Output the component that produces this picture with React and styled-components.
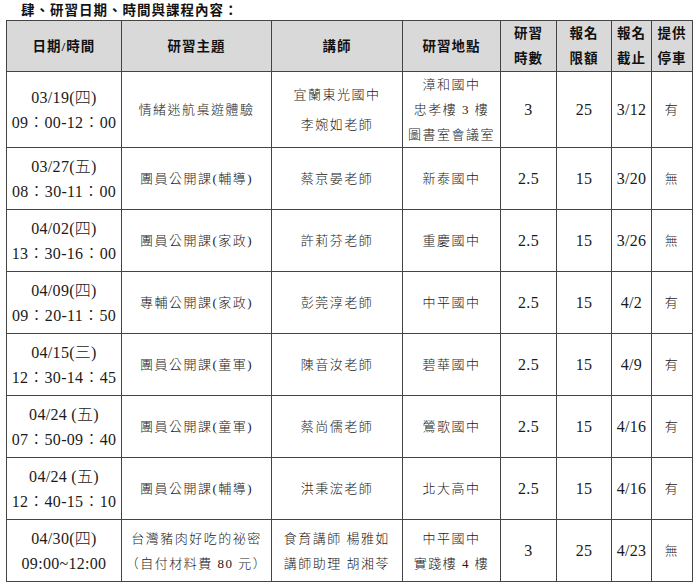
import React from 'react';
import styled, { createGlobalStyle } from 'styled-components';

const GlobalStyle = createGlobalStyle`
  body {
    margin: 0;
    background: #ffffff;
    font-family: 'Liberation Serif', 'Noto Sans CJK TC', serif;
    color: #1a1a1a;
  }
`;

const Page = styled.div`
  width: 700px;
  height: 587px;
  padding-top: 3px;
  box-sizing: border-box;
`;

const Title = styled.h2`
  margin: 0 0 0 21px;
  height: 17px;
  font-size: 13.5px;
  line-height: 16px;
  font-weight: 700;
  letter-spacing: 1px;
  color: #111;
`;

const Table = styled.table`
  margin-left: 6px;
  width: 687px;
  border-collapse: collapse;
  table-layout: fixed;
`;

const Col = styled.col`
  width: ${p => p.$w}px;
`;

const HeadCell = styled.th`
  height: 50px;
  padding: 0;
  background: #d9d9d9;
  border: 1px solid #444;
  font-size: 13.5px;
  line-height: 25px;
  font-weight: 700;
  letter-spacing: 1px;
  text-align: center;
  vertical-align: middle;
  color: #111;
`;

const Cell = styled.td`
  height: ${p => (p.$tall ? 75 : 61)}px;
  padding: 0;
  border: 1px solid #444;
  font-size: ${p => (p.$num ? 16 : 13)}px;
  font-weight: 300;
  line-height: ${p => (p.$loose ? 30 : 25)}px;
  letter-spacing: ${p => (p.$num ? 0.3 : 1.5)}px;
  text-align: center;
  vertical-align: middle;
  white-space: nowrap;
`;

const Line = styled.div``;

const cols = [115, 150, 131, 98, 56, 55, 40, 41];

const heads = [
  ['日期/時間'],
  ['研習主題'],
  ['講師'],
  ['研習地點'],
  ['研習', '時數'],
  ['報名', '限額'],
  ['報名', '截止'],
  ['提供', '停車'],
];

const rows = [
  {
    date: ['03/19(四)', '09：00-12：00'],
    topic: ['情緒迷航桌遊體驗'],
    teacher: ['宜蘭東光國中', '李婉如老師'],
    place: ['漳和國中', '忠孝樓 3 樓', '圖書室會議室'],
    hours: '3', quota: '25', deadline: '3/12', parking: '有',
    tall: true, looseTeacher: true,
  },
  {
    date: ['03/27(五)', '08：30-11：00'],
    topic: ['團員公開課(輔導)'],
    teacher: ['蔡京晏老師'],
    place: ['新泰國中'],
    hours: '2.5', quota: '15', deadline: '3/20', parking: '無',
  },
  {
    date: ['04/02(四)', '13：30-16：00'],
    topic: ['團員公開課(家政)'],
    teacher: ['許莉芬老師'],
    place: ['重慶國中'],
    hours: '2.5', quota: '15', deadline: '3/26', parking: '無',
  },
  {
    date: ['04/09(四)', '09：20-11：50'],
    topic: ['專輔公開課(家政)'],
    teacher: ['彭莞淳老師'],
    place: ['中平國中'],
    hours: '2.5', quota: '15', deadline: '4/2', parking: '有',
  },
  {
    date: ['04/15(三)', '12：30-14：45'],
    topic: ['團員公開課(童軍)'],
    teacher: ['陳音汝老師'],
    place: ['碧華國中'],
    hours: '2.5', quota: '15', deadline: '4/9', parking: '有',
  },
  {
    date: ['04/24 (五)', '07：50-09：40'],
    topic: ['團員公開課(童軍)'],
    teacher: ['蔡尚儒老師'],
    place: ['鶯歌國中'],
    hours: '2.5', quota: '15', deadline: '4/16', parking: '有',
  },
  {
    date: ['04/24 (五)', '12：40-15：10'],
    topic: ['團員公開課(輔導)'],
    teacher: ['洪秉浤老師'],
    place: ['北大高中'],
    hours: '2.5', quota: '15', deadline: '4/16', parking: '有',
  },
  {
    date: ['04/30(四)', '09:00~12:00'],
    topic: ['台灣豬肉好吃的祕密', '（自付材料費 80 元）'],
    teacher: ['食育講師 楊雅如', '講師助理 胡湘苓'],
    place: ['中平國中', '實踐樓 4 樓'],
    hours: '3', quota: '25', deadline: '4/23', parking: '無',
  },
];

const Lines = ({ items }) => items.map((t, i) => <Line key={i}>{t}</Line>);

export default function App() {
  return (
    <Page>
      <GlobalStyle />
      <Title>肆、研習日期、時間與課程內容：</Title>
      <Table>
        <colgroup>
          {cols.map((w, i) => <Col key={i} $w={w} />)}
        </colgroup>
        <thead>
          <tr>
            {heads.map((h, i) => (
              <HeadCell key={i}><Lines items={h} /></HeadCell>
            ))}
          </tr>
        </thead>
        <tbody>
          {rows.map((r, i) => (
            <tr key={i}>
              <Cell $tall={r.tall} $num><Lines items={r.date} /></Cell>
              <Cell $tall={r.tall}><Lines items={r.topic} /></Cell>
              <Cell $tall={r.tall} $loose={r.looseTeacher}><Lines items={r.teacher} /></Cell>
              <Cell $tall={r.tall}><Lines items={r.place} /></Cell>
              <Cell $tall={r.tall} $num>{r.hours}</Cell>
              <Cell $tall={r.tall} $num>{r.quota}</Cell>
              <Cell $tall={r.tall} $num>{r.deadline}</Cell>
              <Cell $tall={r.tall}>{r.parking}</Cell>
            </tr>
          ))}
        </tbody>
      </Table>
    </Page>
  );
}
